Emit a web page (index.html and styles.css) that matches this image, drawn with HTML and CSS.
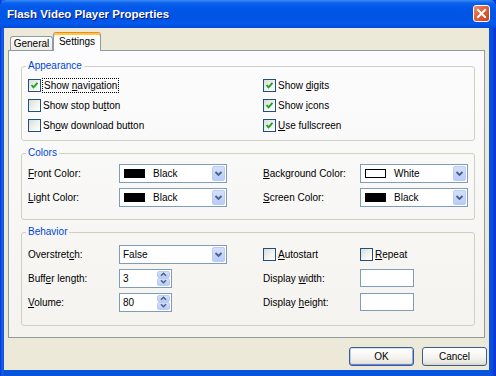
FILE: index.html
```html
<!DOCTYPE html>
<html>
<head>
<meta charset="utf-8">
<link rel="stylesheet" href="styles.css">
</head>
<body>
<div class="window">
  <div class="titlebar">
    <span class="title">Flash Video Player Properties</span>
    <span class="close"><svg width="11" height="11" viewBox="0 0 11 11"><path d="M2 2 L9 9 M9 2 L2 9" stroke="#fff" stroke-width="2" stroke-linecap="square"/></svg></span>
  </div>
  <div class="client">
    <div class="tabs">
      <div class="tab tab-general">General</div>
      <div class="tab tab-active">Settings</div>
    </div>
    <div class="panel">
      <fieldset class="group g-appearance">
        <legend>Appearance</legend>
        <div class="grid rows3">
          <label class="chk span2"><span class="box on"><svg width="11" height="11" viewBox="0 0 11 11"><polyline points="2.5,5 4.5,7.3 8.5,2.8" fill="none" stroke="#21A121" stroke-width="1.9"/></svg></span><span class="focus">Show <u>n</u>avigation</span></label>
          <label class="chk span2"><span class="box on"><svg width="11" height="11" viewBox="0 0 11 11"><polyline points="2.5,5 4.5,7.3 8.5,2.8" fill="none" stroke="#21A121" stroke-width="1.9"/></svg></span><span>Show <u>d</u>igits</span></label>
          <label class="chk span2"><span class="box"></span><span>Show stop bu<u>t</u>ton</span></label>
          <label class="chk span2"><span class="box on"><svg width="11" height="11" viewBox="0 0 11 11"><polyline points="2.5,5 4.5,7.3 8.5,2.8" fill="none" stroke="#21A121" stroke-width="1.9"/></svg></span><span>Show <u>i</u>cons</span></label>
          <label class="chk span2"><span class="box"></span><span>Sh<u>o</u>w download button</span></label>
          <label class="chk span2"><span class="box on"><svg width="11" height="11" viewBox="0 0 11 11"><polyline points="2.5,5 4.5,7.3 8.5,2.8" fill="none" stroke="#21A121" stroke-width="1.9"/></svg></span><span><u>U</u>se fullscreen</span></label>
        </div>
      </fieldset>

      <fieldset class="group g-colors">
        <legend>Colors</legend>
        <div class="grid rows2">
          <span class="lbl"><u>F</u>ront Color:</span>
          <div class="combo"><span class="swatch"></span><span class="val">Black</span><span class="arrow"><svg width="13" height="15" viewBox="0 0 13 15"><polyline points="3.5,6 6.5,9 9.5,6" fill="none" stroke="#4D6185" stroke-width="1.8"/></svg></span></div>
          <span class="lbl"><u>B</u>ackground Color:</span>
          <div class="combo"><span class="swatch white"></span><span class="val">White</span><span class="arrow"><svg width="13" height="15" viewBox="0 0 13 15"><polyline points="3.5,6 6.5,9 9.5,6" fill="none" stroke="#4D6185" stroke-width="1.8"/></svg></span></div>
          <span class="lbl"><u>L</u>ight Color:</span>
          <div class="combo"><span class="swatch"></span><span class="val">Black</span><span class="arrow"><svg width="13" height="15" viewBox="0 0 13 15"><polyline points="3.5,6 6.5,9 9.5,6" fill="none" stroke="#4D6185" stroke-width="1.8"/></svg></span></div>
          <span class="lbl"><u>S</u>creen Color:</span>
          <div class="combo"><span class="swatch"></span><span class="val">Black</span><span class="arrow"><svg width="13" height="15" viewBox="0 0 13 15"><polyline points="3.5,6 6.5,9 9.5,6" fill="none" stroke="#4D6185" stroke-width="1.8"/></svg></span></div>
        </div>
      </fieldset>

      <fieldset class="group g-behavior">
        <legend>Behavior</legend>
        <div class="grid rows3">
          <span class="lbl">Overstret<u>c</u>h:</span>
          <div class="combo"><span class="val plain">False</span><span class="arrow"><svg width="13" height="15" viewBox="0 0 13 15"><polyline points="3.5,6 6.5,9 9.5,6" fill="none" stroke="#4D6185" stroke-width="1.8"/></svg></span></div>
          <label class="chk"><span class="box"></span><span><u>A</u>utostart</span></label>
          <label class="chk"><span class="box"></span><span><u>R</u>epeat</span></label>

          <span class="lbl">Buff<u>e</u>r length:</span>
          <div class="spin"><span class="val">3</span><span class="spinbtns"><span class="sb"><svg width="11" height="7" viewBox="0 0 11 7"><polyline points="3,4.8 5.5,2.3 8,4.8" fill="none" stroke="#4D6185" stroke-width="1.6"/></svg></span><span class="sb"><svg width="11" height="7" viewBox="0 0 11 7"><polyline points="3,2.2 5.5,4.7 8,2.2" fill="none" stroke="#4D6185" stroke-width="1.6"/></svg></span></span></div>
          <span class="lbl">Display <u>w</u>idth:</span>
          <div class="text"></div>

          <span class="lbl"><u>V</u>olume:</span>
          <div class="spin"><span class="val">80</span><span class="spinbtns"><span class="sb"><svg width="11" height="7" viewBox="0 0 11 7"><polyline points="3,4.8 5.5,2.3 8,4.8" fill="none" stroke="#4D6185" stroke-width="1.6"/></svg></span><span class="sb"><svg width="11" height="7" viewBox="0 0 11 7"><polyline points="3,2.2 5.5,4.7 8,2.2" fill="none" stroke="#4D6185" stroke-width="1.6"/></svg></span></span></div>
          <span class="lbl">Display <u>h</u>eight:</span>
          <div class="text"></div>
        </div>
      </fieldset>
    </div>
    <div class="buttons">
      <button class="btn default">OK</button>
      <button class="btn">Cancel</button>
    </div>
  </div>
</div>
</body>
</html>
```

FILE: styles.css
```css
* { box-sizing: border-box; }
body {
  margin: 0;
  font-family: "Liberation Sans", Arial, sans-serif;
  font-size: 10px;
  color: #000;
  background: #fff;
}
u { text-decoration: underline; text-underline-offset: 1px; }

.window {
  width: 496px;
  height: 376px;
  display: flex;
  flex-direction: column;
  background: linear-gradient(to right, #0831D9 0, #1660EA 2px, #0855DD 4px, #0855DD 488px, #0A4CD9 492px, #0831D9 100%);
}

.titlebar {
  height: 28px;
  flex: none;
  display: flex;
  align-items: center;
  justify-content: space-between;
  padding: 0 6px 0 7px;
  background: linear-gradient(to bottom, #3A8CF6 0, #0C62EC 3px, #0157E8 8px, #0154E4 18px, #0259EB 24px, #0349D6 28px);
  border-radius: 6px 6px 0 0;
}
.title {
  color: #fff;
  font-weight: bold;
  font-size: 11.5px;
  text-shadow: 1px 1px 0 #0A1883;
  margin-top: -1px;
}
.close {
  width: 17px;
  height: 17px;
  border: 1px solid #fff;
  border-radius: 3px;
  background: linear-gradient(135deg, #F08E6A 0%, #E2603A 45%, #C8421A 100%);
  display: flex;
  align-items: center;
  justify-content: center;
  margin-top: -1px;
}

.client {
  flex: 1;
  margin: 0 7px 6px 4px;
  background: #ECE9D8;
  display: flex;
  flex-direction: column;
}

.tabs {
  height: 23px;
  margin-bottom: -1px;
  padding-left: 6px;
  display: flex;
  align-items: flex-end;
  position: relative;
  z-index: 1;
}
.tab {
  border: 1px solid #919B9C;
  border-bottom: none;
  border-radius: 3px 3px 0 0;
  text-align: center;
  line-height: 12px;
}
.tab-general {
  width: 43px;
  height: 14px;
  margin-bottom: 1px;
  padding-top: 1px;
  background: linear-gradient(#FFFFFF, #ECEBE6);
}
.tab-active {
  width: 48px;
  height: 19px;
  padding-top: 3px;
  background: #FCFCFE;
  border-top: 1px solid #E68B2C;
  box-shadow: inset 0 2px 0 #FFC83C;
}

.panel {
  height: 288px;
  margin: 0 4px;
  border: 1px solid #919B9C;
  background: linear-gradient(#FCFCFE, #F4F3EE);
  padding: 9px 9px 0 12px;
}

.group {
  margin: 0;
  border: 1px solid #D0D0BF;
  border-radius: 3px;
  padding: 3px 6px 5px 6px;
  min-width: 0;
}
.group legend {
  color: #0046D5;
  padding: 0 2px;
  margin-left: -2px;
  line-height: 12px;
}
.g-colors { margin-top: 6px; padding: 2px 6px 10px 6px; }
.g-behavior { margin-top: 6px; padding: 4px 6px 11px 6px; }

.grid {
  display: grid;
  grid-template-columns: 91px 144px 97px 108px;
  align-items: center;
}
.rows3 { grid-template-rows: repeat(3, 20px); }
.rows2 { grid-template-rows: repeat(2, 24px); }
.g-behavior .rows3 { grid-template-rows: repeat(3, 24px); }
.span2 { grid-column: span 2; }

.chk {
  display: flex;
  align-items: center;
  gap: 2px;
}
.box {
  width: 13px;
  height: 13px;
  flex: none;
  border: 1px solid #1C5180;
  background: linear-gradient(135deg, #DCDCD7 0%, #F4F4F0 60%, #FFFFFF 100%);
  display: flex;
  align-items: center;
  justify-content: center;
}
.focus {
  outline: 1px dotted #000;
  padding: 1px 1px;
}

.combo {
  width: 108px;
  height: 19px;
  border: 1px solid #7F9DB9;
  background: #fff;
  display: flex;
  align-items: center;
}
.swatch {
  width: 21px;
  height: 9px;
  margin-left: 4px;
  background: #000;
  border: 1px solid #000;
  flex: none;
}
.swatch.white { background: #fff; }
.val { margin-left: 8px; }
.val.plain { margin-left: 3px; }
.arrow {
  margin-left: auto;
  margin-right: 1px;
  width: 13px;
  height: 15px;
  border: 1px solid #BACCF5;
  border-radius: 2px;
  background: linear-gradient(#D5E1FB, #B8CCF8);
  display: flex;
  align-items: center;
  justify-content: center;
}
.arrow svg { display: block; margin: -1px; }

.spin {
  width: 53px;
  height: 19px;
  border: 1px solid #7F9DB9;
  background: #fff;
  display: flex;
  align-items: center;
}
.spin .val { margin-left: 3px; }
.spinbtns {
  margin-left: auto;
  margin-right: 1px;
  width: 13px;
  height: 15px;
  display: flex;
  flex-direction: column;
}
.sb {
  flex: 1;
  border: 1px solid #BACCF5;
  border-radius: 2px;
  background: linear-gradient(#D5E1FB, #B8CCF8);
  display: flex;
  align-items: center;
  justify-content: center;
  overflow: hidden;
}
.sb svg { display: block; flex: none; }

.text {
  width: 54px;
  height: 18px;
  border: 1px solid #7F9DB9;
  background: #fff;
}

.buttons {
  margin-top: 9px;
  padding-right: 2px;
  display: flex;
  justify-content: flex-end;
  gap: 8px;
}
.btn {
  width: 65px;
  height: 19px;
  font-family: "Liberation Sans", Arial, sans-serif;
  font-size: 10px;
  color: #000;
  border: 1px solid #3C5D8C;
  border-radius: 3px;
  background: linear-gradient(#FFFFFF 0%, #F6F5F1 50%, #E9E7E0 85%, #D8D3C6 100%);
  padding: 0;
}
.btn.default {
  box-shadow: inset 0 1px 0 #CEE7FF, inset 0 -1px 0 #6982EE, inset 1px 0 0 #B4CDF5, inset -1px 0 0 #8CA8EE;
}
```
